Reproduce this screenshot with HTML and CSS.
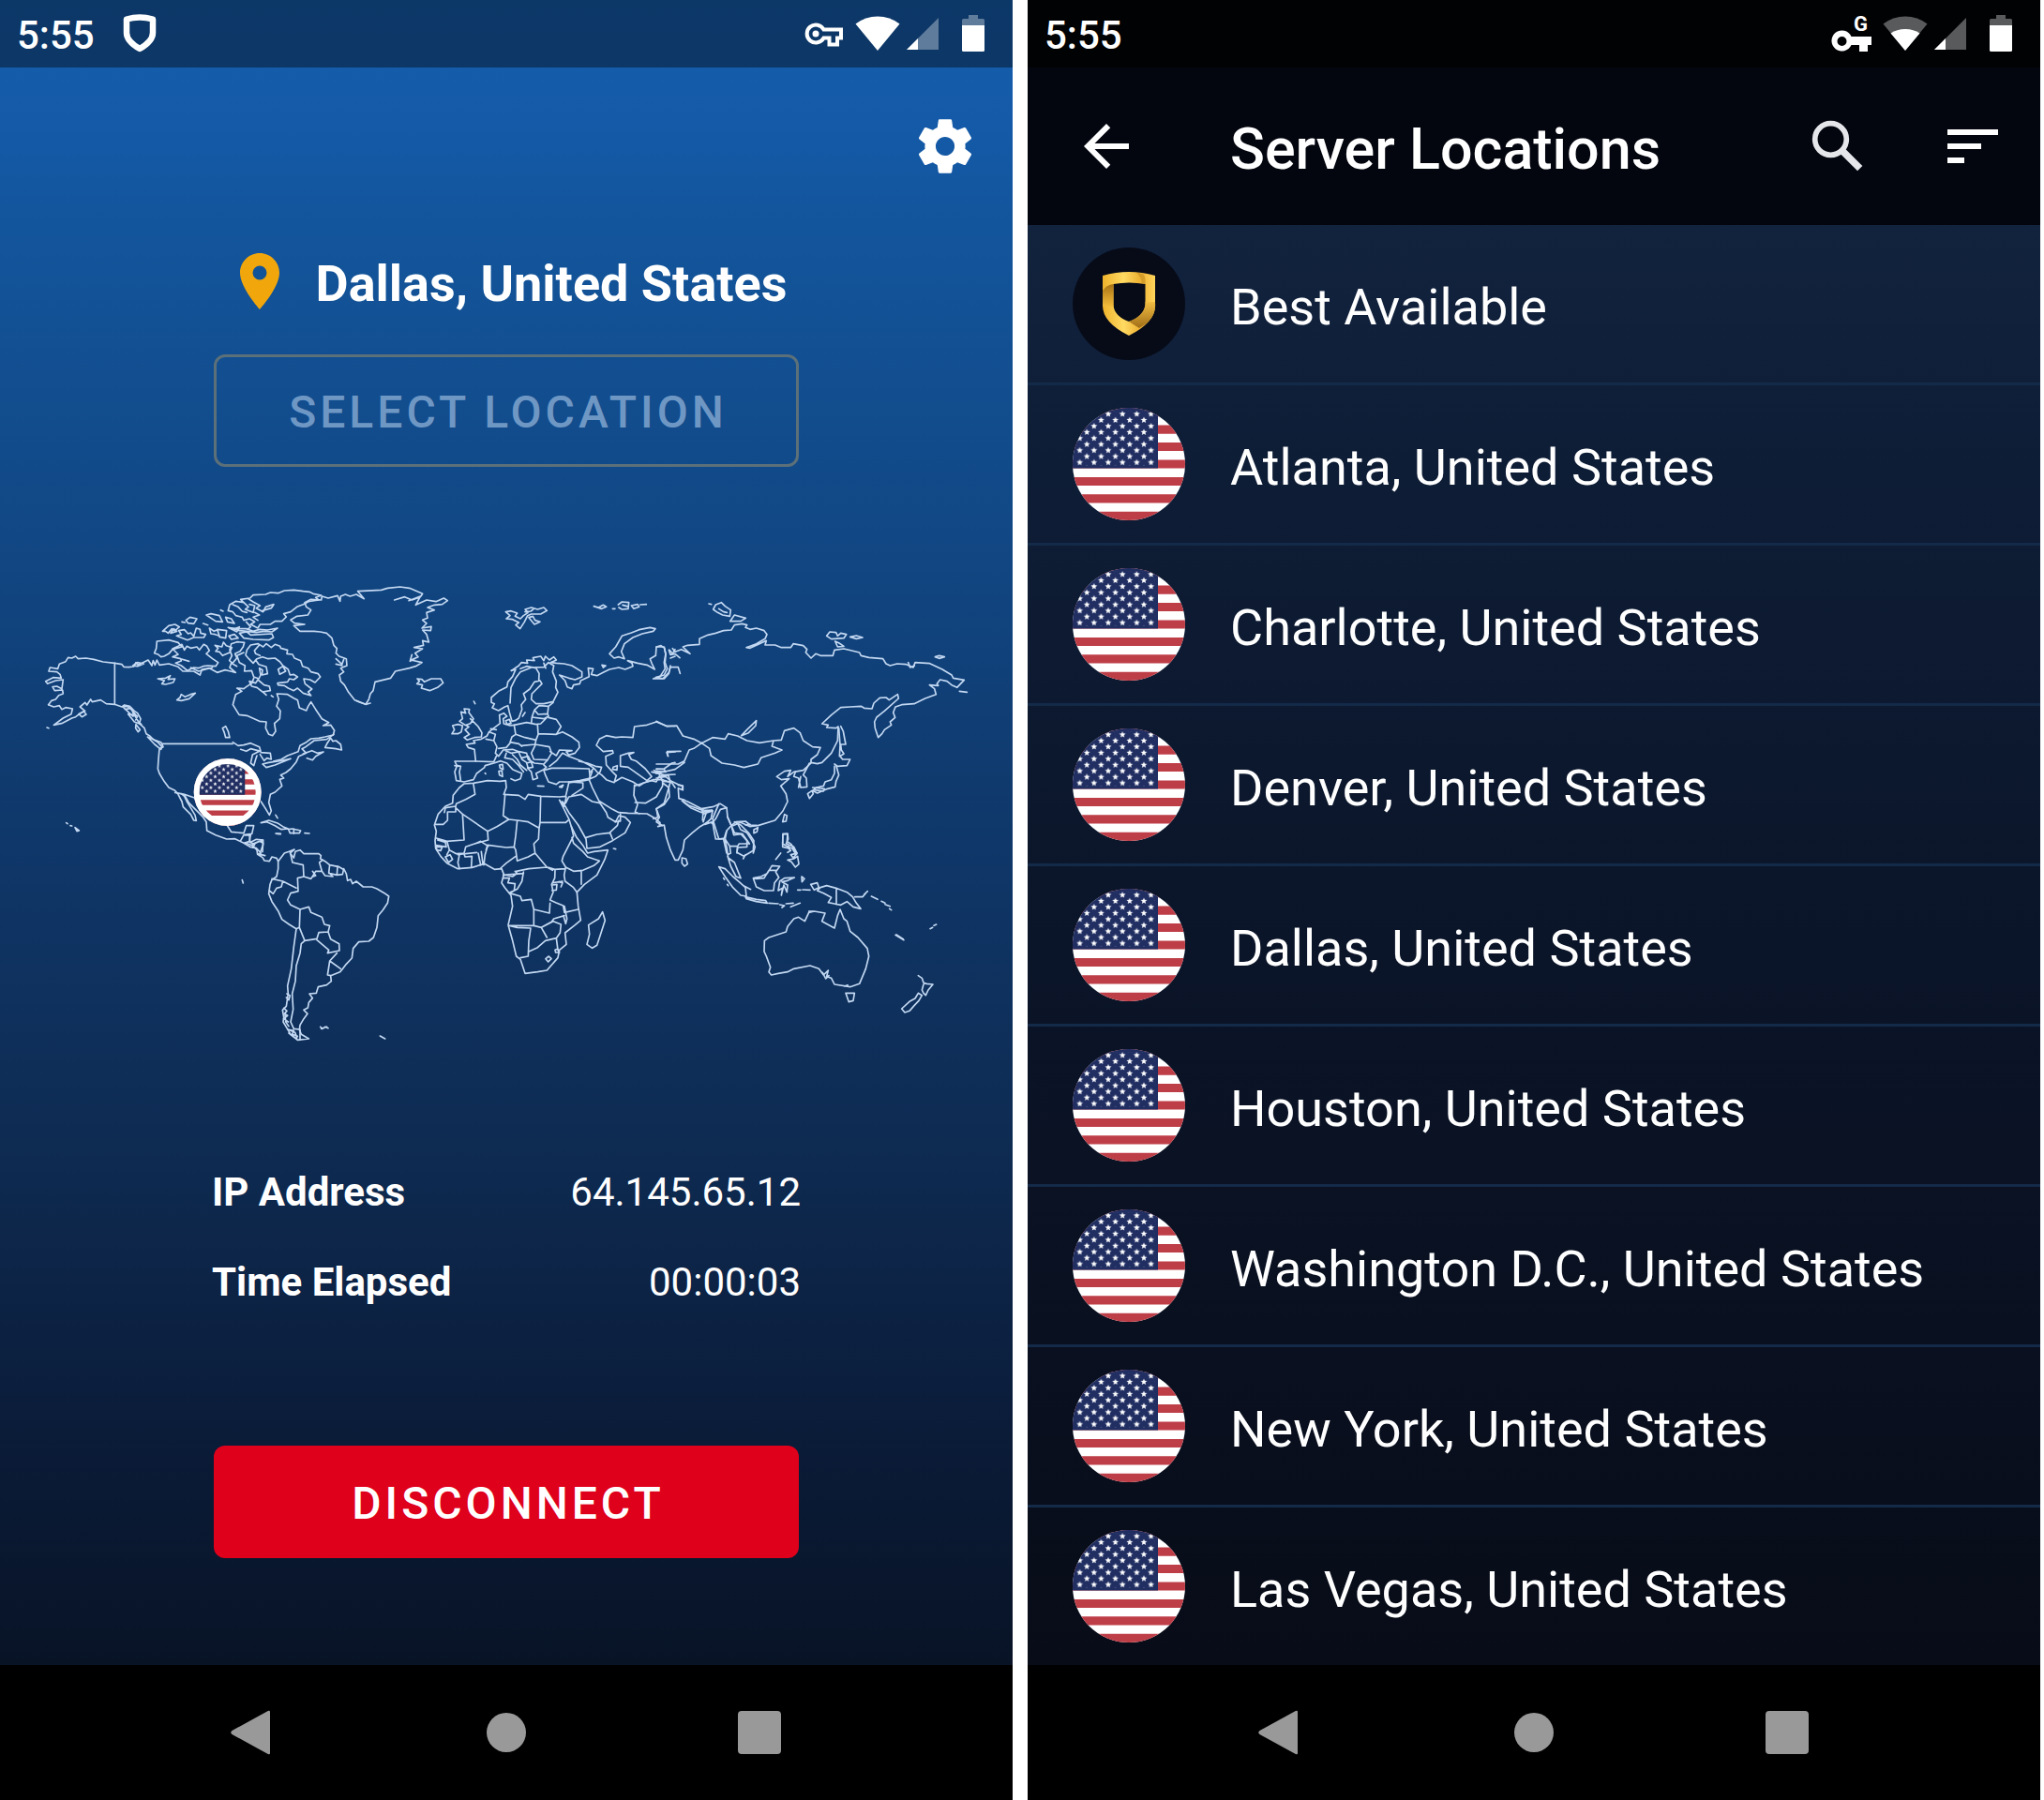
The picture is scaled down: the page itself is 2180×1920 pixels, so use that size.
FILE: index.html
```html
<!DOCTYPE html>
<html lang="en">
	<head>
		<meta charset="utf-8" />
		<meta name="viewport" content="width=device-width, initial-scale=1" />
		<title>Server Locations</title>
		<link rel="stylesheet" href="styles.css" />
	</head>
	<body>
		<!-- shared icons -->
		<svg class="sprite" aria-hidden="true">
			<defs>
				<clipPath id="round"><circle cx="60" cy="60" r="60" /></clipPath>
				<pattern id="stars" x="3.8" y="3.1" width="15.2" height="12.9" patternUnits="userSpaceOnUse">
					<path id="star" fill="#fff" d="M3.800 0l.9 2.300 2.500.2-1.900 1.600.6 2.400-2.100-1.300-2.100 1.300.6-2.400L.4 2.500l2.500-.2z" />
					<use href="#star" x="7.6" y="6.4" />
				</pattern>
				<linearGradient id="gold" x1="0" y1="0" x2="1" y2="0">
					<stop offset="0" stop-color="#f0b32c" />
					<stop offset=".4" stop-color="#ffda62" />
					<stop offset=".7" stop-color="#eeb233" />
					<stop offset="1" stop-color="#ffd45a" />
				</linearGradient>
				<linearGradient id="foldLeft" x1="0" y1="0" x2="0" y2="1">
					<stop offset="0" stop-color="#a87215" />
					<stop offset="1" stop-color="#f4bc3a" />
				</linearGradient>
				<linearGradient id="foldRight" x1="0" y1="0" x2="0" y2="1">
					<stop offset="0" stop-color="#f2bd42" />
					<stop offset="1" stop-color="#a06d17" />
				</linearGradient>
			</defs>
			<symbol id="flag" viewBox="0 0 120 120">
				<g clip-path="url(#round)">
					<path fill="#fff" d="M0 0h120v120H0z" />
					<path stroke="#be3e48" stroke-width="9.2" d="M0 4.600h120M0 23.100h120M0 41.500h120M0 60h120M0 78.500h120M0 96.900h120M0 115.400h120" />
					<path fill="#202e62" d="M0 0h91v64.600H0z" />
					<path fill="url(#stars)" d="M3.800 3h84v58.800h-84z" />
				</g>
			</symbol>
			<symbol id="signal" viewBox="0 0 36 36">
				<path fill="#fff" fill-opacity=".35" d="M35 1v34H1z" />
				<path fill="#fff" d="M13 23v12H1z" />
			</symbol>
			<symbol id="battery" viewBox="0 0 24 40">
				<path fill="#fff" fill-opacity=".35" d="M7 0h10v4h5.500q1.500 0 1.500 1.500V11H0V5.500Q0 4 1.500 4H7z" />
				<path fill="#fff" d="M0 11h24v26.500q0 1.500-1.500 1.500h-21Q0 39 0 37.500z" />
			</symbol>
			<symbol id="navBack" viewBox="0 0 48 48"><path fill="#999" d="M42 2v44q0 2-2.200 1L1.500 26q-2.500-2 0-4L39.800 1q2.200-1 2.200 1z" /></symbol>
			<symbol id="navHome" viewBox="0 0 48 48"><circle cx="24" cy="24" r="21" fill="#999" /></symbol>
			<symbol id="navRecent" viewBox="0 0 48 48"><rect x="1" y="1" width="46" height="46" rx="4" fill="#999" /></symbol>
		</svg>

		<section class="phone home">
			<div class="status">
				<span class="clock">5:55</span>
				<svg class="shield" viewBox="0 0 36 42"><path fill="none" stroke="#fff" stroke-width="6.500" stroke-linejoin="round" d="M4 5.500Q18 1.500 32 5.500V20Q32 29 18 37 4 29 4 20z" /></svg>
				<div class="status-icons">
					<svg class="key" viewBox="0 0 42 40"><path fill="none" stroke="#fff" stroke-width="4" d="M20.500 15.500H39v9h-4v7h-8.500v-7h-6A9.500 9.500 0 1 1 20.500 15.500z" /><circle cx="12" cy="20" r="3.500" fill="#fff" /></svg>
					<svg class="wifi" viewBox="0 0 48 38"><path fill="#fff" d="M24 37L.5 8.500Q11 .5 24 .5t23.500 8z" /></svg>
					<svg class="signal"><use href="#signal" /></svg>
					<svg class="battery"><use href="#battery" /></svg>
				</div>
			</div>
			<main class="connection">
				<button class="icon-button settings" aria-label="Settings">
					<svg viewBox="-.5 -.5 25 25"><path fill="#fff" d="M19.430 12.980c.04-.32.07-.64.07-.98s-.03-.66-.07-.98l2.110-1.650c.19-.15.24-.42.12-.64l-2-3.460c-.12-.22-.39-.3-.61-.22l-2.490 1c-.52-.4-1.080-.73-1.690-.98l-.38-2.650A.488.488 0 0 0 14 2h-4c-.25 0-.46.18-.49.42l-.38 2.650c-.61.25-1.170.59-1.690.98l-2.490-1c-.23-.09-.49 0-.61.22l-2 3.460c-.13.22-.07.49.12.64l2.110 1.650c-.04.32-.07.65-.07.98s.03.66.07.98l-2.110 1.650c-.19.15-.24.42-.12.64l2 3.460c.12.22.39.3.61.22l2.490-1c.52.4 1.080.73 1.690.98l.38 2.650c.03.24.24.42.49.42h4c.25 0 .46-.18.49-.42l.38-2.650c.61-.25 1.170-.59 1.690-.98l2.490 1c.23.09.49 0 .61-.22l2-3.460c.12-.22.07-.49-.12-.64l-2.110-1.650zM12 15.500c-1.930 0-3.500-1.570-3.500-3.500s1.570-3.500 3.500-3.500 3.500 1.570 3.500 3.500-1.570 3.500-3.500 3.500z" /></svg>
				</button>
				<div class="location">
					<svg viewBox="0 0 24 24"><path fill="#f1a60c" d="M12 2C8.130 2 5 5.130 5 9c0 5.250 7 13 7 13s7-7.750 7-13c0-3.870-3.130-7-7-7zm0 9.500a2.500 2.500 0 0 1 0-5 2.500 2.500 0 0 1 0 5z" /></svg>
					<h1>Dallas, United States</h1>
				</div>
				<button class="button select" disabled>SELECT LOCATION</button>

				<svg class="map" viewBox="0 0 3240 1620" role="img" aria-label="World map">
					<!-- North America -->
					<g transform="translate(90 30)">
						<path d="M65 425L75 412 88 408 98 395 112 390 110 378 85 380 78 368 92 366 108 374 112 345 88 348 62 358 56 350 80 338 106 340 102 328 92 320 66 318 70 306 95 310 100 295 120 287 128 274 140 276 152 270 160 278 185 276 210 280 240 288 277 292 300 296 306 304 322 305 338 303 345 290 352 298 372 288 384 282 396 300 400 284 406 298 412 282 420 298 450 294 480 304 495 318 530 318 550 330 556 312 580 308 605 322 630 314 648 318 664 322 645 306 650 292 668 302" />
						<path d="M65 425L82 432 100 428 108 440 120 434 142 438 138 455 112 468 82 490 110 484 140 468 152 464 165 454 182 445 166 432 182 418 188 426 200 408 205 416 232 410 250 422 277 424 300 432 308 426 325 430 340 445 350 452 360 470 356 485 372 500 378 518 388 524 400 536 425 545 432 560 420 566 417 600 415 630 420 645 435 670 450 690 470 700 480 712 492 735 496 752 520 776 530 795 538 796 534 778 520 755 508 735 500 718 490 710" />
						<path d="M277 292V424M430 550H655M470 706L500 712 530 722M500 714L515 740 545 770 560 785 570 800 572 828 600 842 635 855 662 854 690 868 710 880 730 884 745 900M638 813L650 832 690 836 698 812 722 812 716 838 690 842 680 860M696 842L708 842 710 862 690 868M710 866L730 856 752 858 750 896M712 866L725 872 718 882" />
						<path d="M303 432L318 430 335 445 345 458 335 462 318 446zM320 455L340 458 352 478 362 488 340 480zM345 488L358 505 352 512 344 500zM310 440L330 436 336 452 350 462 344 474M382 528L398 535 415 545 428 560 425 568 405 552zM162 455L178 446 186 456 172 464zM60 498L66 500M335 300L350 290 370 294 350 302z" />
						<path d="M412 222L450 218 480 226 492 240 462 248 450 262 435 270 425 272 416 264 404 260 410 245zM462 246L480 238 492 232 500 250 508 238 520 244 540 240 548 250 562 232 572 238 580 252 570 262 590 278 608 290 600 302 575 300 560 302 545 308 530 306 510 316 490 300 472 292 490 285 488 278 462 272 480 264zM480 276L515 286M520 306L545 318 590 306M430 190L450 172 470 168 484 176 470 188 460 182 448 196 440 190zM456 196L466 182 476 190zM482 188L500 185 512 198 520 195 530 206 538 180 550 184 552 196 568 200 562 210 530 210 510 218 475 205 490 200zM505 155L518 145 540 150 530 166 512 164zM492 160L502 162M570 138L585 134 612 140 622 160 600 158zM616 122L624 126M580 180L595 190 605 185 612 205 598 200 585 198zM606 184L635 188 632 212 612 208zM632 145L650 150 660 165 638 160zM560 165L575 170M640 178L660 182 676 176 668 192z" />
						<path d="M645 105L665 94 690 98 680 88 710 84 720 74 760 72 775 66 800 68 820 60 850 58 880 62 900 64 912 70 938 75 920 82 930 90 900 94 880 104 860 112 840 128 818 134 826 144 812 158 790 158 775 168 742 168 735 180 712 168 725 160 708 150 690 155 685 145 665 140 655 128 640 124zM690 98L705 112 695 120 720 130 725 108 708 104M704 86L720 96 742 108 730 116 752 128 760 112 786 104 778 116 750 124M655 105L672 112 685 126 700 130M725 130L740 138 720 145 735 155M698 160L712 176 702 184" />
						<path d="M645 180L665 182 700 182 720 190 740 184 766 186 798 180 780 192 755 190 730 194 700 190 676 188zM676 196L700 192 712 202 780 198 785 210 770 218 720 216 690 212zM642 205L660 200 672 212 650 216zM598 235L620 240 625 225 634 236 652 242 645 258 622 268 612 256 600 254 608 244zM650 230L668 224 692 226 688 240 678 254 662 262 668 276 654 292 644 284 652 268 645 250z" />
						<path d="M700 250L712 234 736 230 752 240 762 230 778 242 790 232 806 238 808 244 830 250 828 262 846 264 852 276 872 284 878 302 896 308 905 320 928 326 935 336 918 354 902 345 882 342 886 358 908 375 896 384 905 396 880 388 862 372 850 380 832 372 820 364 800 362 798 356 830 352 836 342 850 345 862 336 850 328 838 330 832 312 815 300 806 288 790 276 768 278 750 272 732 278 720 292 706 278 696 266zM738 236L724 252 728 262 742 268M800 312L815 302 824 318 805 328zM708 350L728 356 735 345 755 362 772 366 775 380 750 384 732 370 715 366zM752 385L762 394M778 396L784 400M690 258L668 268 676 290 694 300 692 318 715 316 722 336 738 342 744 330 740 308 750 314 748 330 766 326 762 304 738 296 728 282" />
						<path d="M722 340L716 356 698 368 690 374 668 372 684 382 664 392 655 425 675 457 700 460 740 478 762 480 760 500 770 520 782 524 792 510 788 485 805 470 807 445 795 430 802 408 796 390 830 392 850 404 862 410 868 435 890 444 896 430 905 416 920 440 940 470 962 482 944 492 968 490 980 508 976 522 950 528 930 532 905 534 890 545 870 556 864 575 830 588 810 600 785 606" />
						<path d="M978 520L955 536 915 540 888 560 876 566 890 580 866 590 858 608 840 630 825 642 808 650 818 660 805 664 812 685 790 705 775 712 770 738 778 765 772 778 758 755 745 735M880 582L908 572 925 580 945 576 920 590 910 602 892 596M968 532L975 542 985 540 1000 552 1003 570 985 566 950 562 956 550z" />
						<path d="M655 545L672 556 690 554 712 548 740 560 744 574 712 566 698 574 680 568M740 574L718 585 712 612 722 620 728 600 732 588M745 578L775 580 778 600 764 596 755 604 742 584M750 615L770 610 800 606 840 598 790 618 762 626zM622 500L632 494 640 510 645 530 632 530 628 515zM415 342L440 340 455 332 448 344 470 342 464 354 440 360 428 358 436 348zM476 410L486 402 490 392 502 400 520 392 535 388 515 406 490 412z" />
						<path d="M745 803L770 795 800 805 815 815 832 822 810 824 790 812 764 800zM833 824L845 822 872 828 868 836 838 836zM850 822V838M792 837L808 839M885 836L900 837M792 778L798 788M122 803L126 806M135 812L140 813M150 818L163 828 156 830z" />
						<!-- Greenland and Iceland -->
						<path d="M1055 62L1075 86 1050 72 1030 78 1015 72 1000 78 998 94 990 76 960 84 940 78 938 90 905 88 885 98 890 112 905 122 895 138 860 142 840 154 852 164 885 168 850 172 870 190 915 190 935 192 955 196 972 212 978 235 988 245 985 260 995 270 1018 278 1020 300 1000 308 1010 320 996 330 1000 350 1012 362 1025 385 1045 410 1062 418 1080 424 1095 420M985 278L1004 296 1010 280M985 295L1005 300" />
						<path d="M1055 62L1130 58 1150 52 1190 48 1220 52 1262 70 1255 80 1228 90 1205 80 1172 90M1218 92L1255 78 1240 106 1275 90 1305 95 1330 84 1342 92 1325 104 1300 106 1278 114 1300 122 1275 130 1278 148 1262 154 1275 165 1260 180 1290 175 1288 188 1262 186 1275 200 1282 225 1262 220 1265 235 1235 242 1262 246 1238 260 1248 272 1225 282 1260 290 1240 302 1220 308 1175 318 1160 340 1110 352 1104 380 1095 390 1090 408 1080 424 1050 412M1228 265L1222 286 1240 276" />
						<path d="M1245 342L1260 344 1268 352 1290 342 1320 342 1328 355 1310 370 1285 380 1258 372 1262 362 1244 358 1252 350z" />
					</g>
					<!-- South America -->
					<g transform="translate(540 780)">
						<path d="M247 118L268 126 282 140 284 154 300 164 306 174 322 176 330 162 345 166 350 176M268 122L300 108 302 122 292 150M284 152L308 158M245 92L262 92 258 110M302 118L290 112 270 120" />
						<path d="M350 176L370 150 385 145 402 138 388 150 400 165 405 145 420 140 432 152 480 152 487 158 485 168 500 176 515 188 545 194 562 204 568 216 572 238 582 234 588 248 600 240 622 258 650 258 666 264 690 278 704 288 700 310 685 332 670 350 666 388 655 420 640 432 608 434 590 455 586 486 568 505 555 522 548 530 518 542 520 560 505 572 478 578 472 598 450 600 460 614 448 628 445 645 432 652 444 664 432 680 420 700 418 715 424 730 448 744 412 748 390 730 378 710 366 690 368 675 364 652 376 640 382 600 380 575 392 520 400 450 408 392 385 378 362 362 350 335 330 305 320 280 324 250 330 235 345 225 350 200z" />
						<path d="M390 155L396 180 430 188 432 225 412 230 414 272 390 278 380 300 390 316 420 330 418 388 408 392M330 232L365 240 408 262M365 240L360 258 345 262 334 280 322 270M432 225L455 232 470 208 490 208 482 180 492 172M460 208L470 222 460 226M515 188L512 212 525 225 500 222 490 208M540 192L538 220 512 214M560 200L556 218 538 220M420 330L448 322 455 340 490 355 498 378 515 382 510 402 480 404 474 424 435 430 418 388M510 402L518 425 545 440 546 462 508 470 512 460 474 428M435 430L424 440 420 470 408 510 405 560 395 600 398 650 390 690 400 712 418 714M538 470L515 495 508 540 518 542M515 495L550 520M368 646L378 655 370 664 380 670 368 680 382 690M378 600L388 606 384 620 376 612M420 714V748M380 714L400 718 395 730 412 736M384 726L410 745M386 716L404 724 410 740M372 668L374 690 384 704" />
						<path d="M485 706L492 712 500 706 510 710M488 712L506 706M235 236L238 246M676 735L692 744M345 88L358 88" />
					</g>
					<!-- Europe -->
					<g transform="translate(1140 30)">
						<path d="M478 128L495 125 515 132 508 142 525 150 535 140 550 130 540 120 560 114 580 120 600 114 610 124 590 135 560 135 548 140 538 160 524 182 510 170 520 162 500 152 480 150 492 140zM552 146L565 142 572 155 588 160 570 168zM540 128L558 126 566 120M760 110L775 114 790 106 800 112 785 118zM820 118L828 118M838 105L850 96 872 98 870 118 850 120 840 114M852 106L866 110M880 108L900 104 905 112 888 118zM908 105L928 104" />
						<path d="M810 262L830 240 850 205 880 195 905 185 940 178 957 182 950 190 915 198 885 210 858 230 848 255 858 278 840 272 825 276z" />
						<path d="M496 316L520 300 528 290 548 292 545 282 570 284 565 275 590 270 600 284 605 270 618 282 632 272 640 282 622 290 640 292 665 294 690 300 722 320 722 336 700 345 680 340 650 330 668 348 675 368 690 374 695 362 715 358 718 348 745 335 742 308 758 310 752 328 770 332 790 322 810 312 840 306 860 312 885 302 882 292 868 284 900 292 930 298 955 312 945 292 940 278 958 268 960 240 975 236 986 244 990 265 988 290 995 310 985 330 958 338 985 342 1000 325 1005 300M786 298L798 300 790 306zM1002 250L1012 262 1020 248M1020 270L1005 276" />
						<path d="M496 316L510 312 500 335 485 352 482 368 455 382 432 402 432 418 442 422 435 435 455 444 475 432 485 428 490 450 498 478 510 475 520 468 530 440 528 425 542 408 535 390 555 375 570 352 588 348 594 358 580 372 562 390 560 408 575 422 600 422 630 415 645 385 638 370 640 350 628 320 632 300 615 290 600 305 560 306 525 320 510 340 495 370 492 420M525 310L545 302 575 308 585 325 584 348M606 308L600 292M540 450L532 462" />
						<path d="M630 418L615 430 585 428 570 442 582 456 612 454 615 430M570 442L562 465 600 470 615 462 612 454M562 465L560 485 575 488 590 486 608 468M458 458L472 452 482 462 470 470 472 486 492 492 505 490 545 482 560 485M458 458L460 485 440 500 425 512 418 525 400 535 375 540 380 548 352 552 358 562 378 568 382 606 315 606 322 620 315 640 320 668 345 672 375 665 385 645 410 626 412 620 440 612 462 605 482 612 500 632 530 645 525 662 508 668 495 662M478 476L490 472 495 485 482 488z" />
						<path d="M505 490L510 520 498 528 492 545 520 550 530 558M510 520L540 530 575 538 582 520 580 490M575 538L572 552 530 556M572 552L618 560 625 580 612 602 568 600 560 580 572 556M582 518L640 520 655 495 640 472 615 466M640 520L660 512 690 528 712 545 714 562 700 580 680 586 672 576 690 572 650 570 640 588 620 575M440 540L450 560 445 580 455 590 470 570 500 568 520 575 545 580 550 600 570 612 600 615 612 602M425 512L445 520 440 540 415 535M430 502L448 505M382 606L440 608 448 590M324 620L334 622 330 640 334 668M315 620L325 622M455 565L480 562 492 548M478 572L495 580 520 576M500 585L515 600 525 618 545 635M520 578L530 600 545 610 550 630 560 640 565 665 580 660 575 645 600 632 608 625 600 618M530 595L550 590 558 605M545 612L560 608 565 625 548 628M480 580L475 595 500 600 520 620 535 640" />
						<path d="M352 490L365 485 375 470 360 450 362 440 345 438 350 452 335 448 340 470 330 478 345 488M365 470L390 495 402 515 400 528 378 530 355 538 345 530 362 520 348 505 360 496 345 488M308 492L325 488 340 492 336 512 325 518 306 518 314 505zM376 414L380 422M458 618L468 616 470 632 460 628zM456 638L466 636 468 655 458 650zM412 644L414 646M580 685L600 686M650 688L662 682 658 690z" />
						<path d="M600 635L625 628 680 628 745 630 748 660 715 668 680 672 650 672 640 680 615 672 605 650zM618 622L640 605 660 580 680 590 720 605 745 618 760 628 750 640M712 606L740 612 765 622 785 625 780 640 765 655 748 662M760 628L770 640 785 650 800 665 825 674 832 652 820 640 800 618 798 590 822 580 820 572 790 575 768 555 778 535 800 524 830 530 850 528 885 530 890 495 930 490 960 480 990 492 1020 494M822 625L835 620 834 634 820 632zM845 588V622L870 625 930 668 945 655 925 630 895 605 880 600 872 585 888 578 870 580zM826 672L850 658 885 672 905 685 920 675 945 668 960 672 968 655 1000 650M945 640L985 650 1020 648M960 632L985 630 1010 612 1020 610M952 635L975 645M993 578L1020 576M993 578L998 590" />
					</g>
					<!-- Africa and Middle East -->
					<g transform="translate(1320 480)">
						<path d="M165 228L195 226 240 218 280 220 298 218 300 240 292 262 340 265 360 278 370 262 410 268 470 270 490 268 500 225 550 218 565 215M165 228L150 240 130 265 128 290 105 300 82 325 70 360 76 380 72 410 74 435 90 460 110 482 145 500 190 496 230 484 262 502 285 500 292 518 285 545 295 560 315 585 320 620 306 680 320 730 332 780 345 790 360 835 400 830 430 825 465 785 470 760 492 742 488 705 520 680 538 665 530 620 526 575 550 550 590 520 615 470 625 440 580 445 560 450 545 425 525 400 508 365 500 340 480 300 470 280M470 280L485 300 492 270M480 285L500 320 530 360 555 405 558 435 600 430 640 410 680 385 697 352 680 335 660 330 650 350 625 335 620 320 600 290 575 285 540 262 500 270 490 290" />
						<path d="M195 230L200 262 170 278 140 292 138 300 105 305 102 320M138 300V318H112V345L98 358H72M138 305L160 325 240 380 270 365 308 342 290 330 296 262M160 325L165 408 110 412 76 402M240 380L242 408 205 418 170 430 165 450 140 452 118 440 110 412M308 342L335 345 330 395 325 430 300 432 240 424 235 440M335 345L370 350 405 370 408 352 410 268M405 370L403 405 388 420 392 450 430 495 372 500 332 508M410 352H490L498 345M392 450L370 462 335 475 330 440 325 430M508 365L515 395 500 425 482 460 478 475 490 495 515 508 545 505 580 490 598 475 560 462 545 445 515 418 510 400M540 505V550M490 495L485 520 488 540 515 560 526 575M488 500L455 502 435 496M456 504L455 530 445 550 450 575 440 600 458 608 482 618 486 640 530 630M450 545L480 540M448 552L462 550 460 568 446 570M468 542L480 545 475 558M432 496L448 505M355 510L350 540 335 565 310 578 345 588 350 602 380 598 388 630 388 682 310 682M388 630L438 642 440 610M388 682L412 688 445 670 452 660 486 650M486 620L494 660 490 676 484 655M310 682L335 688 378 690 372 730 370 780 345 785M372 765L400 752 425 730 460 722 472 705 475 678 450 668 412 688 430 720M460 722L465 760 470 768M426 788L436 780 444 788 434 798zM456 760L465 756 468 768 458 768zM290 520L355 515M290 530L310 530 305 545 328 548 325 570 312 575M300 520L320 525 335 515 328 508M282 498L300 482 330 460M240 428L232 455 228 488M210 450L218 488M205 448L170 452M190 460L188 495M150 455L145 480 150 500M105 462L120 455 128 470 115 480zM75 430L95 430 90 442 78 440zM80 408L105 415 108 430 75 425M220 445L225 485M200 420L218 412 242 428M118 440L110 455M145 455L165 452 168 462 190 460" />
						<path d="M563 680L595 660 608 638 616 665 600 715 590 745 575 754 558 742 566 710zM643 435L650 437M500 222L545 225 545 242 510 265M565 215L575 240 600 290M575 240L565 215 575 188M600 285L640 310 660 320 690 322 750 324 770 335 792 352 790 360M555 400L590 390 630 385 655 362 660 345M632 385L640 405M648 350L665 348 665 325M710 232L708 265 720 295 712 318 725 325M712 235L740 225 770 215 800 215 800 235 780 270 745 290 712 288M800 225L820 240 805 290 780 308 785 335 770 340" />
						<path d="M785 365L805 360 812 400 825 440 840 472 850 472 865 440 870 408 895 385 920 365 945 350M862 465L875 468 880 485 870 492 862 482zM862 282L885 298 925 312 960 314M930 308L928 345M850 232L865 235 862 246M800 215L830 225 840 240M815 125L858 124M815 125L816 138" />
					</g>
					<!-- Asia -->
					<g transform="translate(2100 30)">
						<path d="M0 240L25 240 30 262 25 290 28 310 12 335 -10 342 20 342 40 322 45 305 70 305 76 325M40 250L45 265 60 262 75 275M52 245L60 256 80 248 108 262 85 240 100 235 138 232 138 214 165 202 190 196 215 188 240 186 250 170 275 166 290 170 285 178 300 184 320 180 345 188 354 200 348 214 320 230 288 242 300 244 330 230 352 220 348 234 380 234 400 242 430 242 438 230 470 236 482 248 478 258 495 276 510 262 525 268 565 268 570 250 600 246 650 258 655 268 680 274 725 278 735 294 748 300 770 294 800 296 822 306 828 290 875 293 915 312 945 330 950 340 985 346 962 370 945 362 930 350 908 345 898 358 902 364 874 362 890 374 895 392 860 405 825 422 785 425 765 432 758 450 764 466 748 480 752 490 730 505 722 518 710 530 700 500 698 480 705 465 730 445 775 405 772 392 745 410 735 402 715 403 696 420 690 438 665 436 655 430 620 432 590 434 560 458 530 486 550 490 545 498 575 500 582 495 580 540 560 580 530 610 515 614 495 610" />
						<path d="M182 120L190 105 208 98 220 110 238 122 235 142 212 138 196 130zM168 102L176 104M236 158L250 138 286 148 270 158zM200 118L215 128 226 130M545 205L555 192 575 194 580 205 590 196 608 200 600 212 560 215zM620 208L640 204 660 210 640 214zM572 222L585 228 600 238 580 240zM892 272L905 268 922 272 905 277zM970 382L994 385M806 290L812 306 826 300" />
						<path d="M0 478L35 495 65 492 85 525 120 535 145 548 180 530 220 535 230 518 260 525 290 540 330 547 375 540 400 538 410 508 440 500 460 515 470 540 500 560 525 562 515 585 495 600 495 612 470 635 440 640 420 655 430 635 410 638 385 655 400 665 425 662 398 685 415 710 420 735 405 765 380 795 325 812 300 810 285 798 255 800 240 812 228 785 225 755 205 742 180 752 145 758 100 735 75 725M145 548L170 565 175 588 210 612 250 618 280 626 325 615 335 595 380 580 402 570 370 558 375 540M272 524L290 505 320 476 318 492 295 515zM145 548L120 565 105 570 90 605 70 615 0 615M90 610L60 632 0 645M0 660L30 655 45 668 70 680 85 685 85 698 70 692 72 725 90 730" />
						<path d="M0 630L25 632 30 640 0 638M10 650L20 670 45 672 40 690 42 720 25 745 0 758 10 785 0 800 20 812M45 672L38 650M155 808L180 800 185 830 190 855 215 855 225 900M86 736L110 755 145 770 178 762M145 758L150 775 180 765 175 790 155 808M160 770L150 800M225 755L205 760 190 790 178 805M228 785L240 812 225 828 218 850M240 812L250 835 270 838 290 860 290 880 260 882 258 900M260 805L270 825 290 835 305 858 316 880 310 900M285 810L300 808M312 825L325 818 322 832 312 836zM404 800L410 776 418 780 415 798zM405 840L420 838 422 855 415 870 440 880 450 900M405 840L404 880 425 885 420 870" />
						<path d="M445 640L440 655 455 660 462 690 482 688 480 660 470 650 490 612M462 655L455 690M590 494L598 510 606 552 590 552 592 570 600 582 588 590 596 600 620 600 610 620 580 622 570 615M584 500L588 555 586 590M570 622L570 645 560 665 540 672 535 685 512 690 500 700 515 708 545 695 572 688 575 670 584 650 576 622M484 710L498 700 502 710 490 725zM500 690L538 694M508 698L535 702" />
					</g>
					<!-- South-east Asia and Oceania -->
					<g transform="translate(2220 660)">
						<path d="M80 112L60 160 80 225 98 222 105 250 110 285 130 300 150 350 135 345 118 312 108 280M105 200L100 225 115 248 140 248 138 268 160 280 190 262 192 230 175 205 150 180 130 170M140 248L145 240 178 240M122 190L128 212 155 208 178 240M125 182L150 172 180 185 200 182M115 250L118 270 108 275M158 288L165 275" />
						<path d="M80 314L100 320 125 345 145 362 165 380 168 408 150 405 125 380 100 345zM165 410L200 418 230 422 235 430 200 425 168 416zM240 430L270 432M275 435L290 438 282 444M295 432L318 430M310 442L340 430M95 350L98 354M107 370L110 374M162 376L182 386M190 350L215 345 235 335 250 310 275 312 262 330 272 348 258 365 255 390 225 390 200 378zM190 350L200 352 225 350 240 325 262 325M262 290L278 270M285 208L300 208 298 232 312 242 322 260 330 270M285 208L284 240 298 248 310 262 300 268M300 250L315 255 325 272 310 275 318 285 330 272M300 292L320 288 332 280 336 305 325 315 312 298zM275 360L290 350 322 348 300 358 282 362 300 372 298 395 288 372 280 405 284 382 270 390zM345 345L354 352 346 362zM332 388L342 388M348 387L372 388" />
						<path d="M374 370L395 365 400 380 385 388zM395 390L405 380 425 374 455 382 490 395 508 410 520 430 534 448 510 442 490 425 470 436 450 432 430 428 440 412 415 398zM456 382V434M515 410L540 410 552 396M545 402L556 392M568 408L588 418M600 424L612 430M612 434L628 440M626 448L632 452M645 532L672 548M648 531L670 545M756 512L764 508M768 502L776 498" />
						<path d="M225 585L226 550 240 540 295 522 300 505 320 480 335 475 355 488 368 460 385 456 420 462 410 488 450 510 460 470 468 450 480 480 490 488 500 520 525 540 555 575 560 600 550 640 530 688 500 698 450 690 440 670 425 665 430 645 415 660 400 640 372 630 320 640 300 650 270 655 248 660 240 650 245 635 232 600zM412 652L422 672 432 662M368 456L386 456M482 696L492 692M486 718L514 718 510 742 496 746zM718 662L730 670 735 685 745 688 765 690 750 708 742 725 735 718 730 708 735 690M718 718L730 725 720 742 705 758 690 775 675 780 665 768 690 745 708 735z" />
					</g>
					<!-- active server -->
					<use href="#flag" x="620" y="627" width="216" height="216" />
					<circle class="ring" cx="728" cy="735" r="99" />
				</svg>

				<dl class="details">
					<dt>IP Address</dt>
					<dd>64.145.65.12</dd>
					<dt>Time Elapsed</dt>
					<dd>00:00:03</dd>
				</dl>
				<button class="button disconnect">DISCONNECT</button>
			</main>
			<nav class="navbar">
				<button aria-label="Back"><svg><use href="#navBack" /></svg></button>
				<button aria-label="Home"><svg><use href="#navHome" /></svg></button>
				<button aria-label="Recent apps"><svg><use href="#navRecent" /></svg></button>
			</nav>
		</section>

		<section class="phone servers">
			<div class="status">
				<span class="clock">5:55</span>
				<div class="status-icons">
					<svg class="key" viewBox="0 0 42 40"><path fill="#fff" fill-rule="evenodd" d="M20.500 23H42v9h-4v7h-9v-7h-8.500A11 11 0 1 1 20.500 23zM10.500 23a5 5 0 1 0 0 10 5 5 0 0 0 0-10z" /><text x="23" y="17">G</text></svg>
					<svg class="wifi" viewBox="0 0 48 38"><path fill="#fff" fill-opacity=".35" d="M24 37L.5 8.500Q11 .5 24 .5t23.500 8z" /><path fill="#fff" d="M24 37L8.500 18.500Q15 14 24 14t15.500 4.500z" /></svg>
					<svg class="signal"><use href="#signal" /></svg>
					<svg class="battery"><use href="#battery" /></svg>
				</div>
			</div>
			<header class="toolbar">
				<button class="icon-button" aria-label="Back"><svg viewBox="0 0 24 24"><path fill="#fff" d="M20 11H7.830l5.590-5.590L12 4l-8 8 8 8 1.410-1.410L7.830 13H20v-2z" /></svg></button>
				<h2>Server Locations</h2>
				<button class="icon-button" aria-label="Search"><svg viewBox="0 0 24 24"><circle cx="9.500" cy="9.500" r="5.600" fill="none" stroke="#e4e6ea" stroke-width="1.900" /><path stroke="#e4e6ea" stroke-width="2.500" d="M13.800 13.800l6.100 6.100" /></svg></button>
				<button class="icon-button" aria-label="Sort"><svg viewBox="0 0 24 24"><path fill="#fff" d="M3 18h6v-2H3v2zM3 6v2h18V6H3zm0 7h12v-2H3v2z" /></svg></button>
			</header>
			<ul class="list">
				<li><a href="#">
					<svg viewBox="0 0 120 120">
						<circle cx="60" cy="60" r="60" fill="#070b18" />
						<path fill="url(#gold)" fill-rule="evenodd" d="M32 30Q60 22 88 30V62Q88 80 60 94 32 80 32 62zM43.500 39V61Q44 73 60 79 76 73 77.500 61V39Q60 36 43.500 39z" />
						<path fill="url(#foldLeft)" d="M32 46q4-6 11.500-7v24H32z" />
						<path fill="url(#foldRight)" d="M77.500 58H88q2 18-17 28l-11-7q16-6 17.500-18z" />
						<path fill="#c28a20" fill-opacity=".6" d="M68 27q6 .5 8 2 2 3 1.500 10l-4-.7q0-7-5.500-11.300z" />
					</svg>
					<span>Best Available</span>
				</a></li>
				<li><a href="#"><svg><use href="#flag" /></svg><span>Atlanta, United States</span></a></li>
				<li><a href="#"><svg><use href="#flag" /></svg><span>Charlotte, United States</span></a></li>
				<li><a href="#"><svg><use href="#flag" /></svg><span>Denver, United States</span></a></li>
				<li><a href="#"><svg><use href="#flag" /></svg><span>Dallas, United States</span></a></li>
				<li><a href="#"><svg><use href="#flag" /></svg><span>Houston, United States</span></a></li>
				<li><a href="#"><svg><use href="#flag" /></svg><span>Washington D.C., United States</span></a></li>
				<li><a href="#"><svg><use href="#flag" /></svg><span>New York, United States</span></a></li>
				<li><a href="#"><svg><use href="#flag" /></svg><span>Las Vegas, United States</span></a></li>
			</ul>
			<nav class="navbar">
				<button aria-label="Back"><svg><use href="#navBack" /></svg></button>
				<button aria-label="Home"><svg><use href="#navHome" /></svg></button>
				<button aria-label="Recent apps"><svg><use href="#navRecent" /></svg></button>
			</nav>
		</section>
	</body>
</html>
```
FILE: styles.css
```css
* {
	box-sizing: border-box;
}
body {
	margin: 0;
	padding-right: 4px;
	display: flex;
	gap: 16px;
	min-height: 100vh;
	background: #fff;
	color: #fff;
	font-family: Roboto, "Liberation Sans", sans-serif;
}
.sprite {
	position: absolute;
	width: 0;
	height: 0;
}
button {
	padding: 0;
	border: 0;
	background: none;
	color: inherit;
	font-family: inherit;
	cursor: pointer;
}
svg {
	display: block;
	flex: none;
}
h1,
h2 {
	margin: 0;
}
.phone {
	flex: 1;
	min-width: 0;
	display: flex;
	flex-direction: column;
}
.home {
	background: linear-gradient(#155eae 0, #145aa8 130px, #13559c 240px, #114682 600px, #0f3769 900px, #0e2b52 1220px, #0b1d3b 1500px, #081326 1776px);
}
.servers {
	background: linear-gradient(#12233e 240px, #0e1d36 500px, #0b1529 1000px, #080c18 1776px);
}

/* status bar */
.status {
	height: 72px;
	padding: 0 30px 0 18px;
	display: flex;
	align-items: center;
	background: rgba(0, 0, 0, 0.4);
}
.servers .status {
	background: #010204;
}
.clock {
	padding-top: 4px;
	font-size: 42px;
	font-weight: 500;
	line-height: 48px;
}
.shield {
	width: 36px;
	height: 42px;
	margin-left: 30px;
}
.status-icons {
	margin-left: auto;
	display: flex;
	align-items: center;
}
.key {
	width: 42px;
	height: 40px;
	margin-right: 12px;
	overflow: visible;
}
.key text {
	font-size: 22px;
	font-weight: 700;
	fill: #fff;
}
.wifi {
	width: 48px;
	height: 38px;
	margin-right: 6px;
}
.signal {
	width: 36px;
	height: 36px;
	margin-right: 24px;
}
.battery {
	width: 24px;
	height: 40px;
}

/* connection screen */
.connection {
	flex: 1;
	display: flex;
	flex-direction: column;
	align-items: center;
}
.icon-button svg {
	width: 72px;
	height: 72px;
}
.settings {
	align-self: flex-end;
	margin: 48px 36px 72px;
}
.location {
	display: flex;
	align-items: center;
	gap: 24px;
	margin-bottom: 42px;
}
.location svg {
	width: 72px;
	height: 72px;
}
.location h1 {
	padding-top: 6px;
	font-size: 54px;
	font-weight: 700;
	line-height: 64px;
}
.button {
	width: 100%;
	max-width: 624px;
	height: 120px;
	padding: 2px 0 0 4px;
	border-radius: 12px;
	font-size: 48px;
	font-weight: 500;
	letter-spacing: 4px;
}
.select {
	border: 3px solid #5c7079;
	color: #6f97c4;
}
.map {
	width: 100%;
	height: auto;
	margin: 102px 0 108px;
}
.map path {
	fill: none;
	stroke: #c3d8f2;
	stroke-width: 5;
	stroke-linecap: round;
	stroke-linejoin: round;
}
.map .ring {
	fill: none;
	stroke: #fff;
	stroke-width: 18;
}
.details {
	width: 100%;
	max-width: 628px;
	margin: 0 0 150px;
	display: grid;
	grid-template-columns: auto auto;
	row-gap: 48px;
	font-size: 42px;
	line-height: 48px;
}
.details dt {
	font-weight: 700;
}
.details dd {
	margin: 0;
	text-align: right;
}
.disconnect {
	margin-bottom: 114px;
	background: #df001c;
}

/* server list */
.toolbar {
	height: 168px;
	padding: 0 36px 0 48px;
	display: flex;
	align-items: center;
	gap: 72px;
	background: #03050f;
}
.toolbar h2 {
	flex: 1;
	padding: 6px 0 0 24px;
	font-size: 61px;
	font-weight: 500;
	line-height: 72px;
}
.list {
	flex: 1;
	margin: 0;
	padding: 0;
	list-style: none;
}
.list li {
	border-bottom: 3px solid #142a49;
}
.list li:last-child {
	border-bottom: 0;
}
.list a {
	height: 168px;
	padding: 0 48px;
	display: flex;
	align-items: center;
	gap: 48px;
	color: #fff;
	text-decoration: none;
	font-size: 54px;
	line-height: 64px;
}
.list svg {
	width: 120px;
	height: 120px;
}
.list span {
	padding-top: 8px;
}

/* android navigation */
.navbar {
	height: 144px;
	padding: 0 12.5%;
	display: grid;
	grid-template-columns: repeat(3, 1fr);
	justify-items: center;
	align-items: center;
	background: #000;
}
.navbar svg {
	width: 48px;
	height: 48px;
}
```
